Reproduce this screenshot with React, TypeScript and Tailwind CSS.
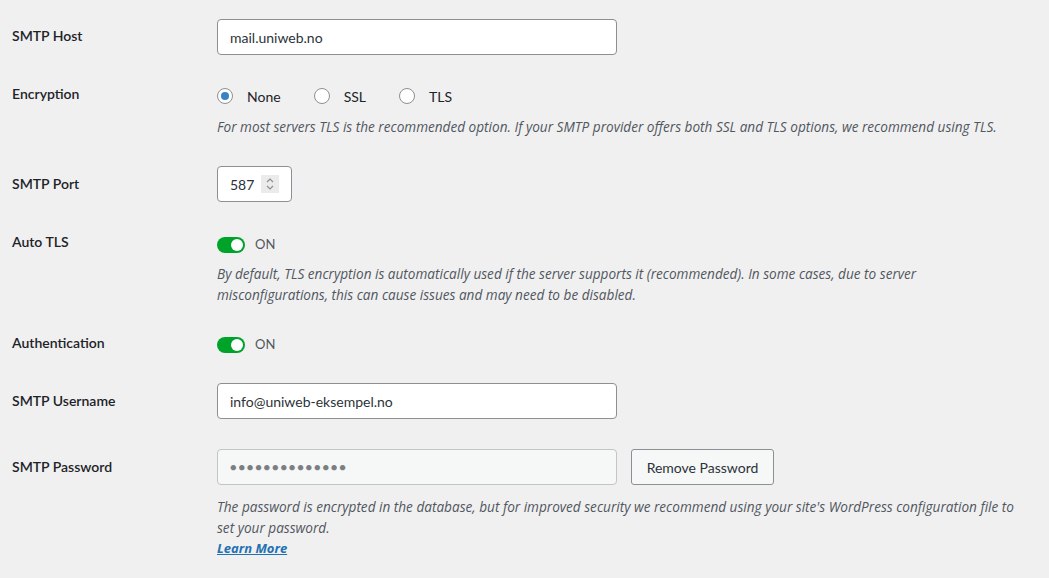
import React from 'react'

const font = { fontFamily: 'Lato, "Noto Sans", sans-serif' }

function Label({ text, pt }: { text: string; pt: string }) {
  return (
    <div className={`w-[205px] shrink-0 text-[14px] leading-[18px] font-semibold text-[#1d2327] ${pt}`}>
      {text}
    </div>
  )
}

function Radio({ label, checked }: { label: string; checked?: boolean }) {
  return (
    <label className="flex items-center">
      <span className="w-4 h-4 rounded-full border border-[#8c8f94] bg-white flex items-center justify-center">
        {checked && <span className="w-2 h-2 rounded-full bg-[#3582c4]" />}
      </span>
      <span className="ml-[14px] text-[14px] text-[#1d2327]">{label}</span>
    </label>
  )
}

function Toggle() {
  return (
    <div className="flex items-center h-5 translate-y-[1px]">
      <span className="w-[28px] h-4 rounded-full bg-[#00a32a] flex items-center justify-end pr-[2px]">
        <span className="w-3 h-3 rounded-full bg-white" />
      </span>
      <span className="ml-[10px] text-[13px] text-[#50575e]">ON</span>
    </div>
  )
}

const descFont = { fontFamily: '"Open Sans", "Noto Sans", sans-serif' }
const desc = 'w-[798px] text-[13.6px] leading-[21px] italic'

export default function App() {
  return (
    <main className="min-h-screen bg-[#f0f0f1] pl-3 w-[1049px]" style={font}>
      {/* SMTP Host */}
      <div className="flex">
        <Label text="SMTP Host" pt="pt-[27px]" />
        <div className="pt-[19px] pb-[15px]">
          <div className="w-[400px] h-9 rounded-[4px] border border-[#8c8f94] bg-white px-3 flex items-center text-[14px] text-[#2c3338]">
            mail.uniweb.no
          </div>
        </div>
      </div>

      {/* Encryption */}
      <div className="flex">
        <Label text="Encryption" pt="pt-[15px]" />
        <div className="pt-4 pb-[14px]">
          <div className="flex items-center h-5 gap-[33px]">
            <Radio label="None" checked />
            <Radio label="SSL" />
            <Radio label="TLS" />
          </div>
          <p className={`${desc} mt-[10px] text-[#50575e]`} style={descFont}>
            For most servers TLS is the recommended option. If your SMTP provider offers both SSL and TLS options, we recommend using TLS.
          </p>
        </div>
      </div>

      {/* SMTP Port */}
      <div className="flex">
        <Label text="SMTP Port" pt="pt-[24px]" />
        <div className="pt-[15px] pb-[15px]">
          <div className="w-[75px] h-9 rounded-[4px] border border-[#8c8f94] bg-white pl-3 pr-3 flex items-center justify-between text-[14px] text-[#2c3338]">
            <span>587</span>
            <span className="w-[18px] h-[18px] bg-[#ebebec] flex flex-col items-center justify-center">
              <svg width="10" height="14" viewBox="0 0 10 14" fill="none" stroke="#8c8f94" strokeWidth="1.2">
                <path d="M2 5l3-3 3 3" />
                <path d="M2 9l3 3 3-3" />
              </svg>
            </span>
          </div>
        </div>
      </div>

      {/* Auto TLS */}
      <div className="flex">
        <Label text="Auto TLS" pt="pt-4" />
        <div className="pt-[17px] pb-[14px]">
          <Toggle />
          <p className={`${desc} mt-[9px] text-[#50575e]`} style={descFont}>
            By default, TLS encryption is automatically used if the server supports it (recommended). In some cases, due to server misconfigurations, this can cause issues and may need to be disabled.
          </p>
        </div>
      </div>

      {/* Authentication */}
      <div className="flex">
        <Label text="Authentication" pt="pt-[15px]" />
        <div className="pt-[15px] pb-[15px]">
          <Toggle />
        </div>
      </div>

      {/* SMTP Username */}
      <div className="flex">
        <Label text="SMTP Username" pt="pt-[23px]" />
        <div className="pt-[14px] pb-[15px]">
          <div className="w-[400px] h-9 rounded-[4px] border border-[#8c8f94] bg-white px-3 flex items-center text-[14px] text-[#2c3338]">
            info@uniweb-eksempel.no
          </div>
        </div>
      </div>

      {/* SMTP Password */}
      <div className="flex">
        <Label text="SMTP Password" pt="pt-[24px]" />
        <div className="pt-[15px] pb-4">
          <div className="flex gap-[14px]">
            <div className="w-[400px] h-9 rounded-[4px] border border-[#c3c4c7] bg-[#f6f7f7] px-3 flex items-center text-[11px] tracking-[1.8px] text-[#7b7e82]">
              ●●●●●●●●●●●●●●
            </div>
            <button className="h-9 w-[143px] rounded-[3px] border border-[#8c8f94] bg-[#f6f7f7] text-[14px] text-[#2c3338]">
              Remove Password
            </button>
          </div>
          <p className={`${desc} mt-[11px] text-[#50575e]`} style={descFont}>
            The password is encrypted in the database, but for improved security we recommend using your site's WordPress configuration file to set your password.
          </p>
          <a href="#" className="block w-fit text-[13px] leading-[21px] italic font-bold underline text-[#2271b1]" style={descFont}>
            Learn More
          </a>
        </div>
      </div>
    </main>
  )
}
